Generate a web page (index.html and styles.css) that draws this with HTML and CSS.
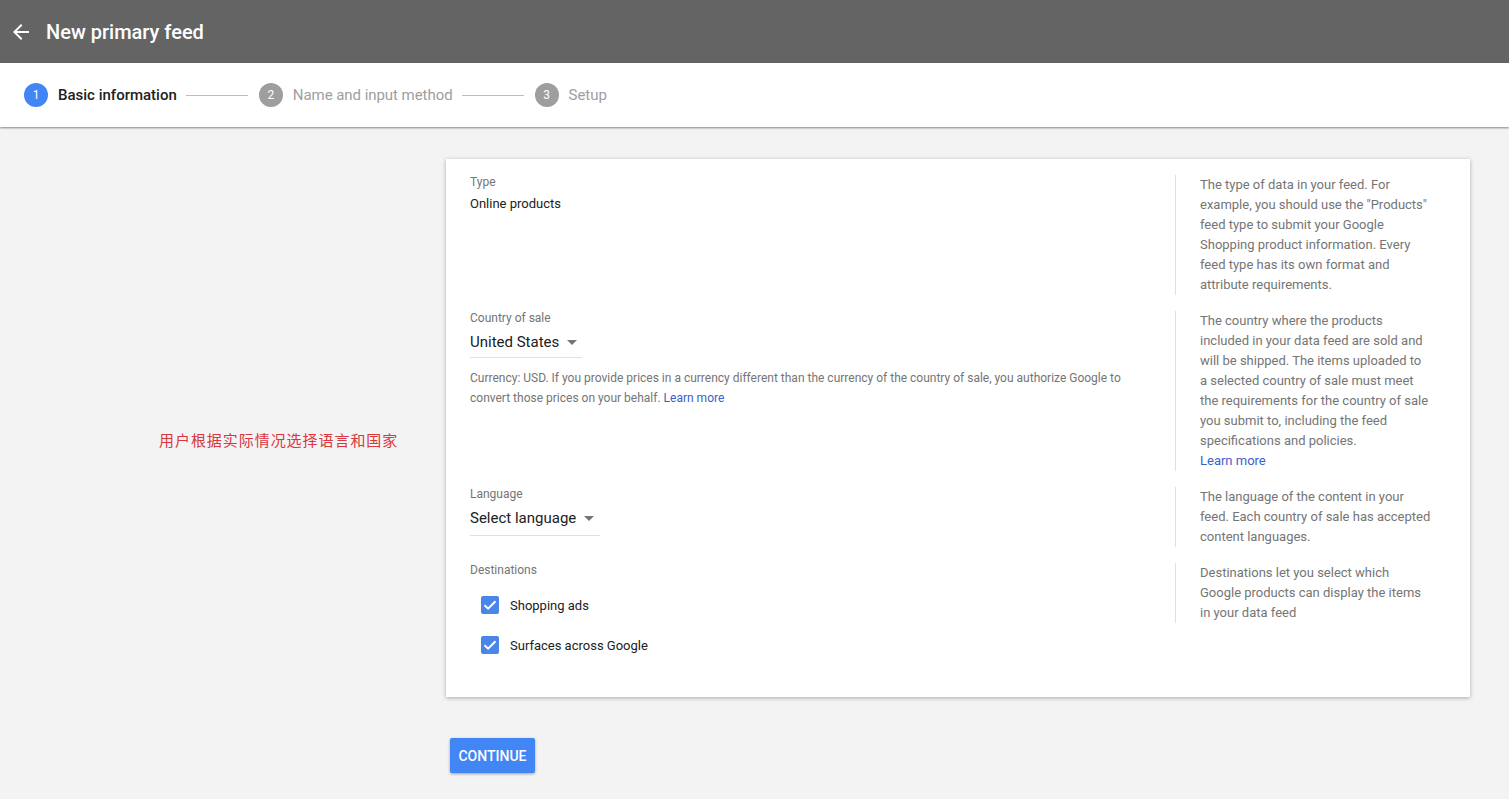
FILE: index.html
```html
<!DOCTYPE html>
<html lang="en">
<head>
<meta charset="utf-8">
<title>New primary feed</title>
<link rel="stylesheet" href="styles.css">
</head>
<body>
<header class="topbar">
  <button class="back" aria-label="Back">
    <svg viewBox="0 0 24 24" width="24" height="24"><path fill="#fff" d="M20 11H7.83l5.59-5.59L12 4l-8 8 8 8 1.41-1.41L7.83 13H20v-2z"/></svg>
  </button>
  <h1 class="title">New primary feed</h1>
</header>
<nav class="stepper">
  <div class="step active"><span class="num">1</span><span class="step-label">Basic information</span></div>
  <span class="connector"></span>
  <div class="step"><span class="num">2</span><span class="step-label">Name and input method</span></div>
  <span class="connector"></span>
  <div class="step"><span class="num">3</span><span class="step-label">Setup</span></div>
</nav>
<main class="main">
  <aside class="side"><p class="note">用户根据实际情况选择语言和国家</p></aside>
  <section class="card">
    <div class="row">
      <div class="field">
        <div class="label">Type</div>
        <div class="value">Online products</div>
      </div>
      <div class="help">The type of data in your feed. For example, you should use the "Products" feed type to submit your Google Shopping product information. Every feed type has its own format and attribute requirements.</div>
    </div>
    <div class="row">
      <div class="field">
        <div class="label">Country of sale</div>
        <div class="select"><span>United States</span><span class="caret"></span></div>
        <p class="hint">Currency: USD. If you provide prices in a currency different than the currency of the country of sale, you authorize Google to convert those prices on your behalf. <a href="#" class="link">Learn more</a></p>
      </div>
      <div class="help">The country where the products included in your data feed are sold and will be shipped. The items uploaded to a selected country of sale must meet the requirements for the country of sale you submit to, including the feed specifications and policies.<br><a href="#" class="link">Learn more</a></div>
    </div>
    <div class="row">
      <div class="field">
        <div class="label">Language</div>
        <div class="select wide"><span>Select language</span><span class="caret"></span></div>
      </div>
      <div class="help">The language of the content in your feed. Each country of sale has accepted content languages.</div>
    </div>
    <div class="row">
      <div class="field">
        <div class="label">Destinations</div>
        <div class="checks">
          <label class="check"><span class="box"><svg viewBox="0 0 18 18" width="18" height="18"><path d="M3.5 9.2l3.6 3.5 7.4-7.4" fill="none" stroke="#fff" stroke-width="2"/></svg></span>Shopping ads</label>
          <label class="check"><span class="box"><svg viewBox="0 0 18 18" width="18" height="18"><path d="M3.5 9.2l3.6 3.5 7.4-7.4" fill="none" stroke="#fff" stroke-width="2"/></svg></span>Surfaces across Google</label>
        </div>
      </div>
      <div class="help">Destinations let you select which Google products can display the items in your data feed</div>
    </div>
  </section>
  <div class="actions"><button class="continue">CONTINUE</button></div>
</main>
</body>
</html>
```
FILE: styles.css
```css
* { box-sizing: border-box; }
html, body { margin: 0; }
body {
  font-family: Roboto, "Noto Sans", Arial, sans-serif;
  background: #f3f3f3;
  color: #212121;
  min-height: 799px;
}
.topbar {
  height: 63px;
  background: #646464;
  display: flex;
  align-items: center;
  padding-left: 9px;
  position: relative;
  z-index: 2;
}
.back {
  width: 24px; height: 24px; padding: 0; border: 0; background: none;
  display: flex; align-items: center; justify-content: center;
  margin-right: 13px;
}
.title {
  margin: 0;
  font-size: 20px;
  font-weight: 500;
  color: #fff;
  line-height: 24px;
}
.stepper {
  height: 64px;
  background: #fff;
  display: flex;
  align-items: center;
  padding-left: 24px;
  box-shadow: 0 1px 2px rgba(0,0,0,0.45);
  position: relative;
  z-index: 1;
}
.step { display: flex; align-items: center; }
.num {
  width: 24px; height: 24px; border-radius: 50%;
  background: #9e9e9e; color: #fff;
  font-size: 12px; display: flex; align-items: center; justify-content: center;
  margin-right: 10px;
}
.step-label { font-size: 15px; color: #9e9e9e; }
.step:not(.active) .step-label { letter-spacing: -0.05px; }
.step.active .num { background: #4285f4; }
.step.active .step-label { color: #212121; font-weight: 500; }
.connector {
  width: 62px; height: 1px; background: #bdbdbd;
  margin: 0 11px 0 9px;
}
.main {
  display: grid;
  grid-template-columns: 446px 1024px;
  padding-top: 32px;
}
.side {
  grid-row: 1;
  align-self: center;
  padding-left: 159px;
  padding-top: 24px;
}
.note {
  margin: 0;
  font-family: "Noto Sans CJK SC", sans-serif;
  font-size: 15px;
  letter-spacing: 0.95px;
  line-height: 20px;
  color: #d9363e;
}
.card {
  grid-row: 1;
  grid-column: 2;
  background: #fff;
  box-shadow: 0 1px 4px rgba(0,0,0,0.3);
  padding: 16px 24px 32px;
  display: flex;
  flex-direction: column;
  gap: 16px;
}
.row {
  display: grid;
  grid-template-columns: 1fr 271px;
  column-gap: 23px;
  align-items: start;
}
.label { font-size: 12px; line-height: 14px; color: #757575; }
.value { font-size: 13px; line-height: 20px; margin-top: 5px; color: #212121; }
.select {
  display: inline-flex;
  align-items: center;
  font-size: 15px;
  line-height: 24px;
  color: #212121;
  margin-top: 5px;
  padding-bottom: 3px;
  border-bottom: 1px solid #e0e0e0;
  width: 112px;
}
.select.wide { width: 130px; padding-bottom: 5px; }
.caret {
  width: 0; height: 0;
  border-left: 5px solid transparent;
  border-right: 5px solid transparent;
  border-top: 5px solid #757575;
  margin-left: 8px;
}
.field { display: flex; flex-direction: column; align-items: flex-start; }
.hint {
  margin: 10px 0 0;
  font-size: 12px;
  line-height: 20px;
  color: #757575;
}
.link { color: #3b5fc9; text-decoration: none; }
.help {
  border-left: 1px solid #e0e0e0;
  padding: 0 15px 0 24px;
  font-size: 13px;
  line-height: 20px;
  color: #757575;
}
.checks { margin-top: 8px; display: flex; flex-direction: column; }
.check {
  height: 40px;
  display: flex;
  align-items: center;
  padding-left: 11px;
  font-size: 13px;
  color: #212121;
}
.box {
  width: 18px; height: 18px; border-radius: 2px;
  background: #4a86e8;
  display: flex;
  margin-right: 11px;
}
.actions { grid-column: 2; padding: 41px 0 0 4px; }
.continue {
  height: 35px;
  padding: 0 8px;
  border: 0;
  border-radius: 2px;
  background: #4285f4;
  color: #fff;
  font-family: Roboto, Arial, sans-serif;
  font-size: 14px;
  font-weight: 500;
  box-shadow: 0 1px 3px rgba(0,0,0,0.35);
  width: 85px;
}
```
